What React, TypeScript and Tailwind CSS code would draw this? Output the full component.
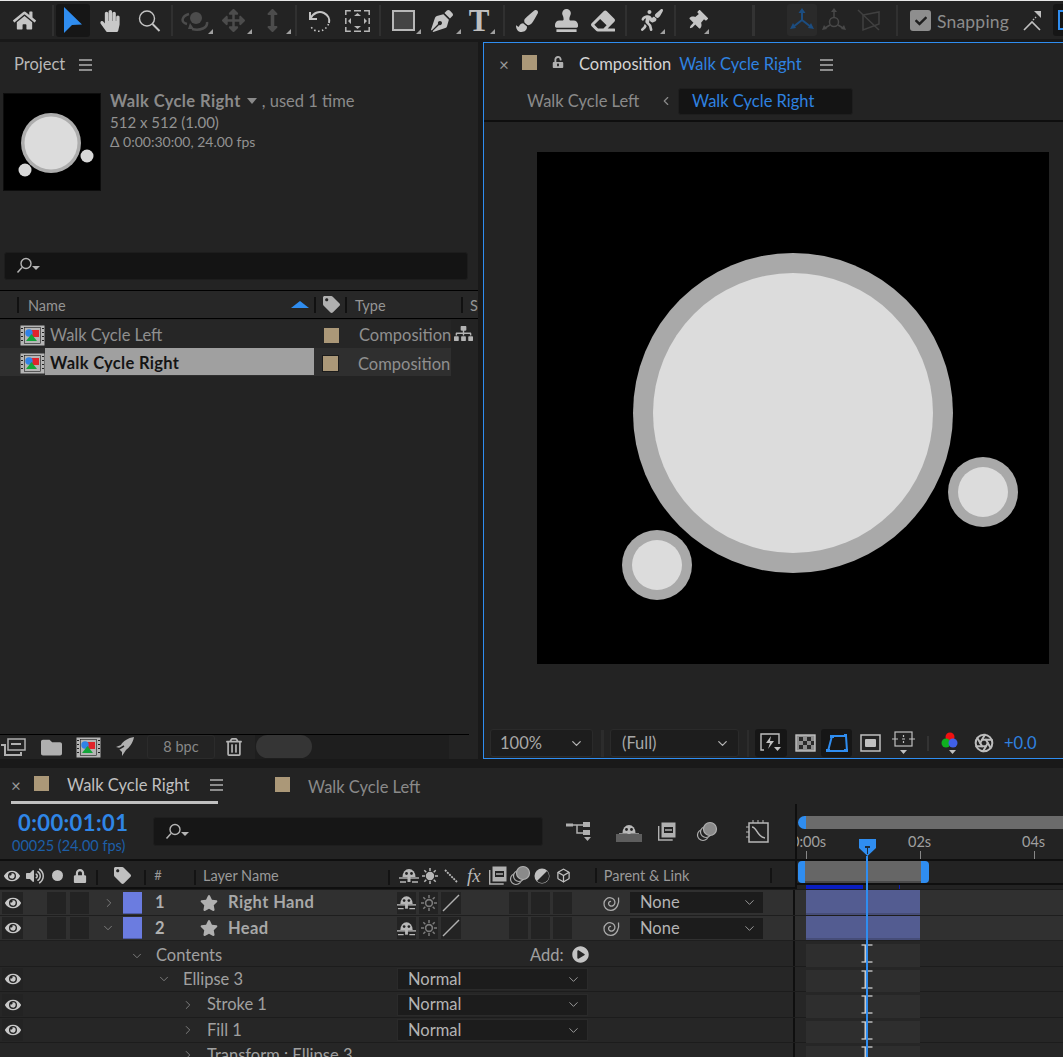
import React from "react";
import { FaHandPaper, FaArrowsAlt, FaArrowsAltV, FaPaintBrush, FaStamp, FaEraser, FaPenNib, FaThumbtack, FaWalking, FaTag, FaEye, FaVolumeUp, FaLock, FaUnlockAlt, FaStar, FaPlayCircle, FaSitemap, FaFolder, FaCheck, FaRegTrashAlt, FaHome } from "react-icons/fa";
import { Aperture, Box, ChevronDown, ChevronRight, ChevronLeft } from "lucide-react";

const font = "font-['Lato','Noto_Sans',sans-serif]";

function Corner() {
  return <span className="absolute right-[1px] bottom-[3px] w-0 h-0 border-l-[5px] border-l-transparent border-b-[5px] border-b-[#a0a0a0]" />;
}

function Slot({ w, children, corner, className = "" }: { w: number; children?: React.ReactNode; corner?: boolean; className?: string }) {
  return (
    <div style={{ width: w }} className={`relative h-[33px] flex items-center justify-center shrink-0 ${className}`}>
      {children}
      {corner && <Corner />}
    </div>
  );
}

function Div({ w, thick }: { w: number; thick?: boolean }) {
  return (
    <div style={{ width: w }} className="h-[33px] flex items-center justify-center shrink-0">
      <div className={`${thick ? "w-[3px] bg-[#333]" : "w-[2px] bg-[#303030]"} h-[31px]`} />
    </div>
  );
}

function Burger({ className = "" }: { className?: string }) {
  return (
    <svg width="13" height="12" viewBox="0 0 13 12" className={`shrink-0 ${className}`}>
      <path d="M0 1h13M0 6h13M0 11h13" stroke="#b0b0b0" strokeWidth="1.5" />
    </svg>
  );
}

function Swatch({ className = "" }: { className?: string }) {
  return <div className={`w-[15px] h-[15px] bg-[#ab9878] shrink-0 ${className}`} />;
}

function Search() {
  return (
    <svg width="26" height="18" viewBox="0 0 26 18">
      <circle cx="10" cy="6.5" r="5" fill="none" stroke="#b4b4b4" strokeWidth="1.4" />
      <path d="M6 10.5 1.5 15.5" stroke="#b4b4b4" strokeWidth="1.5" />
      <path d="M16 9h8l-4 4z" fill="#b4b4b4" />
    </svg>
  );
}

function CompIcon() {
  return (
    <svg width="25" height="21" viewBox="0 0 25 21" className="shrink-0">
      <rect x="0.5" y="0.5" width="24" height="20" fill="#b5b5b5" />
      <path d="M2 3v1M2 7v1M2 11v1M2 15v1M23 3v1M23 7v1M23 11v1M23 15v1" stroke="#222" strokeWidth="2" />
      <rect x="4.5" y="2.5" width="16" height="16" fill="#b5b5b5" stroke="#1b1b1b" strokeWidth="0.6" />
      <rect x="11" y="5" width="8" height="7" fill="#e0242c" />
      <circle cx="9" cy="8" r="3.7" fill="#2f82e8" />
      <path d="M11.5 9 17 16H6z" fill="#13a53a" />
    </svg>
  );
}

function Shy({ w = 20 }: { w?: number }) {
  return (
    <svg width={w} height="17" viewBox="0 0 20 17">
      <path d="M3.500 10a6.500 8 0 0 1 13 0z" fill="#b8b8b8" />
      <circle cx="7.500" cy="6.500" r="1.400" fill="#222" />
      <circle cx="12.500" cy="6.500" r="1.400" fill="#222" />
      <path d="M0 11h20" stroke="#b8b8b8" strokeWidth="1.400" />
      <path d="M8.500 10h3v5h-3z" fill="#b8b8b8" />
      <path d="M1 15h6M13 15h6" stroke="#b8b8b8" strokeWidth="1.400" />
    </svg>
  );
}

function Sun({ dim }: { dim?: boolean }) {
  const c = dim ? "#7c7c7c" : "#b8b8b8";
  return (
    <svg width="16" height="16" viewBox="0 0 16 16">
      <circle cx="8" cy="8" r="3.4" fill={dim ? "none" : c} stroke={c} strokeWidth="1.6" />
      <path d="M8 0v3M8 13v3M0 8h3M13 8h3M2.3 2.3l2 2M11.7 11.7l2 2M2.3 13.7l2-2M11.7 4.3l2-2" stroke={c} strokeWidth="1.5" />
    </svg>
  );
}

function Film() {
  return (
    <svg width="18" height="19" viewBox="0 0 18 19">
      <rect x="3.5" y="0.5" width="14" height="15" fill="#b0b0b0" />
      <path d="M6 5h9v6H6z" fill="#232323" />
      <path d="M7 8h7" stroke="#b0b0b0" strokeWidth="1.5" />
      <path d="M0.7 4v14h14" fill="none" stroke="#b0b0b0" strokeWidth="1.4" />
    </svg>
  );
}

function Blur() {
  return (
    <svg width="22" height="21" viewBox="0 0 22 21">
      <circle cx="7" cy="14" r="5.5" fill="none" stroke="#b0b0b0" strokeWidth="1.2" />
      <circle cx="10" cy="11" r="5.5" fill="#232323" stroke="#b0b0b0" strokeWidth="1.2" />
      <circle cx="14" cy="8" r="6.5" fill="#8a8a8a" stroke="#b0b0b0" strokeWidth="1.2" />
    </svg>
  );
}

function Spiral() {
  return (
    <svg width="18" height="18" viewBox="0 0 18 18">
      <path d="M16.5 3.5C17.5 9 15 16 9 16.3 4.5 16.5 1.7 13 2 9.2 2.3 5.5 5.5 3.3 8.8 3.8c3 .5 4.6 3 4 5.500-.5 2-2.500 3.200-4.300 2.700-1.500-.4-2.200-1.900-1.800-3.200.3-1 1.400-1.600 2.300-1.200" fill="none" stroke="#aaa" strokeWidth="1.3" />
    </svg>
  );
}

function Toolbar() {
  return (
    <div className="h-[39px] shrink-0 bg-[#232323] border-t border-t-[#e8e8e8] flex items-start pt-[3px]">
      <Slot w={49}><FaHome size={23} color="#c4c4c4" /></Slot>
      <Div w={7} />
      <div className="h-[33px] w-[34px] shrink-0 rounded-[3px] bg-[#161616] flex items-center justify-center">
        <svg width="20" height="27" viewBox="0 0 20 27"><path d="M1 0 19 17.500 9 18 1 26z" fill="#2f8df0" /></svg>
      </div>
      <Slot w={40}><FaHandPaper size={22} color="#c8c8c8" /></Slot>
      <Slot w={38}>
        <svg width="24" height="24" viewBox="0 0 24 24"><circle cx="10" cy="9.500" r="7.500" fill="none" stroke="#c4c4c4" strokeWidth="1.4" /><path d="m15.500 15 7 7" stroke="#c4c4c4" strokeWidth="2" /></svg>
      </Slot>
      <Div w={8} />
      <Slot w={38} corner>
        <svg width="28" height="24" viewBox="0 0 28 24"><circle cx="15" cy="9" r="6" fill="#4c4c4c" /><path d="M8 5C1 7-1 13 6 15M11 20c8 2 16-1 15-7" fill="none" stroke="#4c4c4c" strokeWidth="2.500" /><path d="m9 14-2 6 6 0z" fill="#4c4c4c" /></svg>
      </Slot>
      <Slot w={39} corner><FaArrowsAlt size={23} color="#4c4c4c" /></Slot>
      <Slot w={39} corner><FaArrowsAltV size={23} color="#4c4c4c" /></Slot>
      <Div w={7} />
      <Slot w={40}>
        <svg width="26" height="26" viewBox="0 0 26 26"><path d="M4 4v7h7" fill="none" stroke="#c4c4c4" strokeWidth="2" /><path d="M4.500 10.500C7 5 13 2.500 18 5c4 2 6 6 5 10" fill="none" stroke="#c4c4c4" strokeWidth="2" /><path d="M22.500 16c-2 5-7 8-12 7-2-.4-4-2-5.500-4" fill="none" stroke="#c4c4c4" strokeWidth="1.600" strokeDasharray="1.500 2.500" /></svg>
      </Slot>
      <Slot w={36}>
        <svg width="25" height="22" viewBox="0 0 25 22"><path d="M.8 5V.8h5M19 .8h5.200V5M.8 17v4.200h5M19 21.200h5.200V17M9 .8h7M9 21.200h7M.8 8v6M24.200 8v6" fill="none" stroke="#b8b8b8" strokeWidth="1.500" /><path d="M9 6h7l-3.500-3zM9 16h7l-3.500 3zM6 8v6l-3-3zM19 8v6l3-3z" fill="#b8b8b8" /></svg>
      </Slot>
      <Div w={10} />
      <Slot w={37} corner>
        <div className="w-[23px] h-[21px] bg-[#444] border-2 border-[#b8b8b8]" />
      </Slot>
      <Slot w={40} corner><FaPenNib size={22} color="#c4c4c4" /></Slot>
      <Slot w={34} corner>
        <span className="font-['Liberation_Serif',serif] text-[31px] leading-none font-bold text-[#c0c0c0]">T</span>
      </Slot>
      <Div w={16} />
      <Slot w={30}><FaPaintBrush size={22} color="#c4c4c4" /></Slot>
      <Slot w={48}><FaStamp size={23} color="#c4c4c4" /></Slot>
      <Slot w={26}><FaEraser size={24} color="#c4c4c4" /></Slot>
      <Div w={20} />
      <Slot w={30} corner>
        <FaWalking size={21} color="#c4c4c4" className="-ml-[8px]" />
        <FaPaintBrush size={13} color="#c4c4c4" className="absolute right-[3px] top-[5px]" />
      </Slot>
      <Div w={18} />
      <Slot w={26} corner><FaThumbtack size={20} color="#c4c4c4" className="rotate-45" /></Slot>
      <div className="w-[41px] shrink-0" />
      <Div w={5} thick />
      <div className="w-[31px] shrink-0" />
      <div className="h-[32px] w-[30px] shrink-0 rounded-[3px] bg-[#2a2a2a] flex items-center justify-center">
        <svg width="26" height="26" viewBox="0 0 26 26"><path d="M13 13V4M13 13 4 20M13 13l9 7" stroke="#1c4d80" strokeWidth="2" /><path d="m13 1 3.500 5h-7zM1 22l3-6 3 5zM25 22l-3-6-3 5z" fill="#1c4d80" /></svg>
      </div>
      <Slot w={34}>
        <svg width="24" height="26" viewBox="0 0 24 26"><circle cx="12" cy="14" r="4.500" fill="none" stroke="#484848" strokeWidth="1.500" /><path d="M12 9V3M8 17l-5 3M16 17l5 3" stroke="#484848" strokeWidth="1.500" /><path d="m12 0 3 4H9zM0 22l2-5 3 4zM24 22l-2-5-3 4z" fill="#484848" /></svg>
      </Slot>
      <Slot w={36}>
        <svg width="24" height="24" viewBox="0 0 24 24"><path d="M6 6 22 3v12L6 21z" fill="none" stroke="#404040" strokeWidth="1.500" /><path d="m1 1 21 20" stroke="#404040" strokeWidth="1.500" /></svg>
      </Slot>
      <Div w={20} />
      <div className="flex items-center h-[33px] shrink-0">
        <div className="w-[21px] h-[21px] rounded-[3px] bg-[#8e8e8e] flex items-center justify-center ml-[3px]"><FaCheck size={12} color="#1f1f1f" /></div>
        <span className={`${font} ml-[6px] mt-[4px] text-[17.500px] text-[#8c8c8c] tracking-[0.2px]`}>Snapping</span>
      </div>
      <Slot w={40} className="ml-[4px]">
        <svg width="20" height="22" viewBox="0 0 20 22"><path d="m1 20 8-8 8 8" fill="none" stroke="#c0c0c0" strokeWidth="1.600" /><path d="m10 10 3-3" stroke="#c0c0c0" strokeWidth="1.500" strokeDasharray="1.500 1.500" /><path d="M18 1v7l-7-7z" fill="#c0c0c0" /></svg>
      </Slot>
      <div className="h-[32px] flex-1 bg-[#161616] rounded-l-[3px] pl-[5px] flex items-center"><div className="w-[5px] h-[20px] border-l-2 border-y-2 border-[#2f8df0]" /></div>
    </div>
  );
}

function ProjectPanel() {
  return (
    <div className={`w-[478px] shrink-0 bg-[#232323] flex flex-col ${font} overflow-hidden`}>
      <div className="h-[44px] shrink-0 flex items-center pl-[14px] pt-[1px]">
        <span className="text-[16.500px] text-[#b8b8b8]">Project</span>
        <Burger className="ml-[14px]" />
      </div>
      <div className="h-[104px] shrink-0 flex pl-[3px] pt-[7px]">
        <div className="w-[98px] h-[98px] bg-black border border-[#0d0d0d]">
          <svg width="96" height="96" viewBox="0 0 96 96" className="blur-[0.5px]">
            <circle cx="47" cy="49" r="30" fill="#adadad" />
            <circle cx="47" cy="49" r="26.500" fill="#dcdcdc" />
            <circle cx="83" cy="62" r="6.500" fill="#d8d8d8" />
            <circle cx="21" cy="76" r="6.500" fill="#d8d8d8" />
          </svg>
        </div>
        <div className="ml-[9px] flex flex-col text-[14.500px] text-[#8a8a8a] leading-[20.500px] -mt-[2px]">
          <div className="flex items-center text-[16.500px]">
            <span className="font-bold text-[#8a8a8a] tracking-[0.4px]">Walk Cycle Right</span>
            <span className="ml-[6px] w-0 h-0 border-x-[5px] border-x-transparent border-t-[6px] border-t-[#8a8a8a]" />
            <span className="ml-[5px]">, used 1 time</span>
          </div>
          <span className="text-[15px] text-[#929292]">512 x 512 (1.00)</span>
          <span className="text-[14px] text-[#929292]">Δ 0:00:30:00, 24.00 fps</span>
        </div>
      </div>
      <div className="h-[28px] shrink-0 mt-[62px] mx-[4px] w-[464px] bg-[#141414] rounded-[3px] border border-[#1d1d1d] flex items-center pl-[11px]"><Search /></div>
      <div className="h-[29px] shrink-0 mt-[10px] bg-[#272727] border-y border-black flex items-center text-[14.500px] text-[#959595]">
        <div className="w-[19px] h-[16px] border-r-2 border-[#111] shrink-0" />
        <span className="ml-[9px] mt-[2px] w-[263px]">Name</span>
        <span className="w-0 h-0 border-x-[9px] border-x-transparent border-b-[7px] border-b-[#2f8df0] shrink-0" />
        <div className="ml-[5px] h-[16px] w-[2px] bg-[#111] shrink-0" />
        <div className="w-[29px] flex justify-center shrink-0 pl-[2px]"><FaTag size={17} color="#b0b0b0" /></div>
        <div className="h-[16px] w-[2px] bg-[#111] shrink-0" />
        <span className="ml-[8px] mt-[2px] w-[106px] shrink-0">Type</span>
        <div className="h-[16px] w-[2px] bg-[#111] shrink-0" />
        <span className="ml-[7px] mt-[2px]">S</span>
      </div>
      <div className="h-[29px] shrink-0 flex items-center text-[16.500px] text-[#8f8f8f]">
        <div className="w-[451px] h-[28px] bg-[#262626] flex items-center shrink-0 pt-[4px]">
          <div className="ml-[20px]"><CompIcon /></div>
          <span className="ml-[5px] w-[279px] shrink-0">Walk Cycle Left</span>
          <Swatch className="-ml-[5px]" />
          <span className="ml-[20px] whitespace-nowrap">Composition</span>
        </div>
        <div className="ml-[3px]"><FaSitemap size={19} color="#b4b4b4" /></div>
      </div>
      <div className="h-[28px] w-[451px] shrink-0 bg-[#2f2f2f] flex items-center text-[16.500px] text-[#8f8f8f]">
        <div className="ml-[20px] mt-[2px]"><CompIcon /></div>
        <div className="w-[269px] ml-[0px] h-[27px] self-start bg-[#a0a0a0] flex items-center pl-[5px] pt-[3px] font-bold tracking-[0.3px] text-[#141414] shrink-0">Walk Cycle Right</div>
        <div className="ml-[8px] mt-[2px] w-[17px] h-[17px] border border-[#1b1b1b] bg-[#ab9878] shrink-0" />
        <span className="ml-[19px] mt-[4px] whitespace-nowrap">Composition</span>
      </div>
      <div className="flex-1" />
      <div className="h-[25px] shrink-0 w-[469px] border-t border-black flex items-center">
        <div className="w-[26px] flex justify-center shrink-0">
          <svg width="26" height="18" viewBox="0 0 26 18"><rect x="8" y="1" width="17" height="11" fill="none" stroke="#b0b0b0" strokeWidth="1.500" /><path d="M11 6h10" stroke="#b0b0b0" strokeWidth="2" /><path d="M1 7h4v10h16v-3" fill="none" stroke="#b0b0b0" strokeWidth="2" /></svg>
        </div>
        <div className="w-[50px] flex justify-center shrink-0"><FaFolder size={21} color="#b0b0b0" /></div>
        <div className="w-[24px] flex justify-center shrink-0"><CompIcon /></div>
        <div className="w-[50px] flex justify-center shrink-0">
          <svg width="20" height="20" viewBox="0 0 20 20"><path d="M19 0C13 1 8 4 6 8l-5 2 4 1-1 1 3 3 0 4 4-6c3-2 7-7 8-13z" fill="#b0b0b0" /><path d="M4 12 9 9" stroke="#232323" strokeWidth="1.500" /></svg>
        </div>
        <div className="w-[68px] -ml-[3px] h-[24px] rounded-[3px] border border-[#2b2b2b] text-[14.500px] text-[#888] flex items-center justify-center shrink-0">8 bpc</div>
        <div className="w-[38px] flex justify-center shrink-0"><FaRegTrashAlt size={18} color="#b4b4b4" /></div>
        <div className="ml-[2px] w-[194px] h-[24px] bg-[#1e1e1e] pl-[1px] shrink-0"><div className="w-[56px] h-[23px] rounded-full bg-[#353535]" /></div>
      </div>
    </div>
  );
}

function CtrlSelect({ w, label, pl }: { w: number; label: string; pl: number }) {
  return (
    <div style={{ width: w, paddingLeft: pl }} className="h-[28px] shrink-0 rounded-[3px] bg-[#1d1d1d] border border-[#2a2a2a] flex items-center justify-between pr-[8px] text-[16.500px] text-[#a8a8a8]">
      <span>{label}</span>
      <ChevronDown size={15} color="#b4b4b4" />
    </div>
  );
}

function CompPanel() {
  return (
    <div className={`flex-1 ml-[5px] bg-[#232323] border-l border-y border-[#2f8df0] flex flex-col ${font} overflow-hidden`}>
      <div className="h-[43px] shrink-0 flex items-center">
        <span className="ml-[15px] text-[#9a9a9a] w-[10px] text-[17px] leading-none">×</span>
        <Swatch className="ml-[13px] -mt-[5px]" />
        <FaUnlockAlt size={12} color="#b0b0b0" className="ml-[15px] -mt-[6px]" />
        <span className="ml-[15px] text-[16.500px] text-[#d4d4d4]">Composition</span>
        <span className="ml-[8px] text-[16.500px] text-[#2f82e0]">Walk Cycle Right</span>
        <Burger className="ml-[18px]" />
      </div>
      <div className="h-[36px] shrink-0 flex items-start border-b-2 border-b-[#0e0e0e]">
        <span className="ml-[43px] mt-[3px] text-[16.500px] text-[#8a8a8a] w-[133px] shrink-0">Walk Cycle Left</span>
        <ChevronLeft size={14} color="#8a8a8a" className="mt-[8px] -ml-[1px] shrink-0" />
        <div className="ml-[5px] mt-[2px] w-[175px] h-[27px] rounded-[3px] bg-[#141414] border border-[#1e1e1e] pl-[13px] flex items-center text-[16.500px] text-[#2f82e0]">Walk Cycle Right</div>
      </div>
      <div className="flex-1 flex justify-start pl-[53px] pt-[30px]">
        <svg width="512" height="512" viewBox="0 0 512 512" className="bg-black shrink-0 block">
          <circle cx="256" cy="261" r="160" fill="#a9a9a9" />
          <circle cx="256" cy="261" r="140" fill="#dcdcdc" />
          <circle cx="446" cy="340" r="35" fill="#a9a9a9" />
          <circle cx="446" cy="340" r="25" fill="#dcdcdc" />
          <circle cx="120" cy="413" r="35" fill="#a9a9a9" />
          <circle cx="120" cy="413" r="25" fill="#dcdcdc" />
        </svg>
      </div>
      <div className="h-[34px] shrink-0 flex items-center pl-[6px] pt-[4px]">
        <CtrlSelect w={103} label="100%" pl={9} />
        <div className="w-[3px] h-[27px] bg-[#2c2c2c] ml-[8px]" />
        <div className="w-[6px]" />
        <CtrlSelect w={129} label="(Full)" pl={11} />
        <div className="w-[2px] h-[27px] bg-[#2c2c2c] ml-[8px]" />
        <div className="ml-[6px] w-[32px] h-[28px] rounded-[3px] bg-[#161616] flex items-center justify-center">
          <svg width="22" height="20" viewBox="0 0 22 20"><path d="M4 17H1V1h18v10" fill="none" stroke="#c0c0c0" strokeWidth="1.400" /><path d="M11 3 6 10h4l-2 6 6-8h-4z" fill="#c0c0c0" /><path d="M14 14h7l-3.500 4z" fill="#c0c0c0" /></svg>
        </div>
        <div className="ml-[2px] w-[32px] flex justify-center">
          <svg width="21" height="18" viewBox="0 0 21 18"><rect x="1" y="1" width="19" height="16" fill="#8e8e8e" stroke="#c0c0c0" strokeWidth="1.400" /><path d="M4 3h4v4H4zM12 3h4v4h-4zM8 7h4v4H8zM16 7h3v4h-3zM4 11h4v4H4zM12 11h4v4h-4z" fill="#2a2a2a" /></svg>
        </div>
        <div className="w-[31px] h-[28px] rounded-[3px] bg-[#161616] flex items-center justify-center">
          <svg width="22" height="20" viewBox="0 0 22 20"><path d="M2 18 6 3h14l1 15z" fill="none" stroke="#2f8df0" strokeWidth="2" /><path d="M4 2h4v3H4zM18 1h3v3h-3zM0 16h4v3H0zM18 16h4v3h-4z" fill="#2f8df0" /></svg>
        </div>
        <div className="w-[36px] flex justify-center">
          <svg width="21" height="18" viewBox="0 0 21 18"><rect x="1" y="1" width="19" height="16" fill="#232323" stroke="#c0c0c0" strokeWidth="1.500" /><rect x="5" y="5" width="11" height="8" rx="1" fill="#c0c0c0" /></svg>
        </div>
        <div className="w-[30px] flex justify-center relative">
          <svg width="23" height="24" viewBox="0 0 23 24"><rect x="3" y="1" width="17" height="14" fill="none" stroke="#c0c0c0" strokeWidth="1.200" /><path d="M0 8h6M17 8h6M11.500 4v2M11.500 10v2M10 8h3" stroke="#c0c0c0" strokeWidth="1.200" /><path d="M8 19h7l-3.500 4z" fill="#c0c0c0" /></svg>
        </div>
        <div className="ml-[9px] w-[2px] h-[15px] bg-[#333]" />
        <div className="ml-[11px] w-[22px] flex justify-center">
          <svg width="20" height="24" viewBox="0 0 20 24"><circle cx="9" cy="6" r="4.500" fill="#f01010" /><circle cx="5" cy="12" r="4.500" fill="#10b020" /><circle cx="12" cy="12" r="4.500" fill="#4060e8" /><path d="M8 19h7l-3.500 4z" fill="#c0c0c0" /></svg>
        </div>
        <div className="ml-[12px]"><Aperture size={20} color="#bdbdbd" strokeWidth={2.400} /></div>
        <span className="ml-[10px] text-[16.500px] text-[#2f82e0]">+0.0</span>
      </div>
    </div>
  );
}

function HeaderCell({ w, line, children }: { w: number; line?: boolean; children?: React.ReactNode }) {
  return (
    <div style={{ width: w }} className="h-full flex items-center justify-center shrink-0 relative">
      {children}
      {line && <div className="absolute right-0 top-[6px] h-[15px] w-[2px] bg-[#131313]" />}
    </div>
  );
}

function Cell({ w = 19, className = "", children }: { w?: number; className?: string; children?: React.ReactNode }) {
  return <div style={{ width: w }} className={`h-[22px] bg-[#232323] flex items-center justify-center shrink-0 ${className}`}>{children}</div>;
}

function Eye() {
  return <FaEye size={16} color="#c8c8c8" />;
}

function LayerRow({ h, num, name, open }: { h: number; num: string; name: string; open?: boolean }) {
  return (
    <div style={{ height: h }} className="flex shrink-0 border-b border-b-[#1e1e1e]">
      <div className="w-[795px] shrink-0 bg-[#303030] flex items-center border-r-2 border-r-[#0f0f0f]">
        <Cell w={21} className="ml-[2px]"><Eye /></Cell>
        <Cell className="ml-[24px]" />
        <Cell className="ml-[4px]" />
        <div className="w-[34px] flex justify-end shrink-0 pr-[8px]">
          {open ? <ChevronDown size={14} color="#8a8a8a" strokeWidth={1.400} /> : <ChevronRight size={14} color="#8a8a8a" strokeWidth={1.400} className="-mr-[1px]" />}
        </div>
        <div className="w-[19px] h-[22px] bg-[#6b7ce0] border-b border-[#4f5ca8] shrink-0" />
        <span className="ml-[13px] w-[45px] shrink-0 text-[16.500px] font-bold text-[#b0b0b0]">{num}</span>
        <FaStar size={18} color="#b0b0b0" className="shrink-0" />
        <span className="ml-[10px] w-[169px] shrink-0 text-[16.500px] font-bold tracking-[0.4px] text-[#a8a8a8]">{name}</span>
        <Cell><Shy /></Cell>
        <Cell className="ml-[3px]"><Sun dim /></Cell>
        <Cell w={20} className="ml-[3px]">
          <svg width="18" height="18" viewBox="0 0 18 18"><path d="M1 17 17 1" stroke="#b0b0b0" strokeWidth="1.500" /></svg>
        </Cell>
        <Cell className="ml-[48px]" />
        <Cell className="ml-[3px]" />
        <Cell className="ml-[3px]" />
        <div className="w-[58px] flex justify-end pr-[10px] shrink-0"><Spiral /></div>
        <div className="w-[133px] h-[21px] bg-[#1c1c1c] flex items-center justify-between pl-[10px] pr-[6px] text-[16.500px] text-[#b4b4b4] shrink-0">
          <span>None</span>
          <ChevronDown size={15} color="#a8a8a8" strokeWidth={1.400} />
        </div>
      </div>
      <div className="flex-1 bg-[#303030] pl-[11px]">
        <div className="w-[114px] h-full bg-[#535c91] border-b-2 border-b-[#464d78]" />
      </div>
    </div>
  );
}

function PropRow({ h, indent, chev, label, mode, add, lower }: { h: number; indent: number; chev: "d" | "r"; label: string; mode?: boolean; add?: boolean; lower?: boolean }) {
  return (
    <div style={{ height: h }} className="flex shrink-0 border-b border-b-[#1c1c1c]">
      <div className={`w-[795px] shrink-0 bg-[#262626] flex items-center border-r-2 border-r-[#0f0f0f] relative ${lower ? "pt-[4px]" : ""}`}>
        {mode ? <Cell w={21} className="ml-[2px] bg-[#1e1e1e]"><Eye /></Cell> : <div className="w-[23px] shrink-0" />}
        <div style={{ width: indent }} className="shrink-0 flex justify-end pr-[6px]">
          {chev === "d" ? <ChevronDown size={14} color="#8e8e8e" strokeWidth={1.400} /> : <ChevronRight size={14} color="#8e8e8e" strokeWidth={1.400} />}
        </div>
        <span className="ml-[6px] w-0 shrink-0 whitespace-nowrap text-[16.500px] text-[#a0a0a0]">{label}</span>
        {mode && (
          <div style={{ marginLeft: 368 - indent }} className="w-[191px] h-[22px] bg-[#1c1c1c] border border-[#2a2a2a] flex items-center justify-between pl-[10px] pr-[6px] text-[16.500px] text-[#b4b4b4] shrink-0">
            <span>Normal</span>
            <ChevronDown size={15} color="#a8a8a8" strokeWidth={1.400} />
          </div>
        )}
        {add && (
          <div style={{ marginLeft: 501 - indent }} className="flex items-center shrink-0 text-[16.500px] text-[#a0a0a0]">
            <span>Add:</span>
            <FaPlayCircle size={17} color="#c4c4c4" className="ml-[8px] -mt-[3px]" />
          </div>
        )}
      </div>
      <div className="flex-1 bg-[#262626] pl-[11px]">
        <div className="w-[114px] h-full bg-[#2e2e2e] pl-[55px]">
          <svg width="12" height="19" viewBox="0 0 12 19" className="mt-[3px]">
            <path d="M0.500 1h11M0.500 18h11" stroke="#b8b8b8" strokeWidth="1.500" fill="none" />
            <path d="M4.500 1v17" stroke="#c8c8c8" strokeWidth="2" />
          </svg>
        </div>
      </div>
    </div>
  );
}

function Timeline() {
  return (
    <div className={`flex-1 bg-[#232323] flex flex-col overflow-hidden relative ${font}`}>
      {/* tabs */}
      <div className="h-[36px] shrink-0 flex items-start">
        <div className="ml-[11px] w-[207px] h-[36px] border-b-[3px] border-b-[#c0c0c0] flex items-center shrink-0 pt-[1px]">
          <span className="text-[#9a9a9a] text-[17px] leading-none w-[23px] shrink-0">×</span>
          <Swatch className="-mt-[4px]" />
          <span className="ml-[18px] mt-[1px] text-[16.500px] text-[#c0c0c0] w-[143px] shrink-0">Walk Cycle Right</span>
          <Burger />
        </div>
        <Swatch className="ml-[57px] mt-[9px]" />
        <span className="ml-[18px] mt-[7px] text-[16.500px] text-[#8a8a8a]">Walk Cycle Left</span>
      </div>
      {/* controls + ruler */}
      <div className="h-[57px] shrink-0 flex border-b-2 border-b-[#0f0f0f]">
        <div className="w-[795px] shrink-0 flex items-center relative">
          <div className="w-[153px] shrink-0 flex flex-col pl-[12px] mt-[5px]">
            <span className="ml-[6px] text-[22px] leading-[24px] font-bold text-[#2f86e6] tracking-[0.4px]">0:00:01:01</span>
            <span className="text-[14.500px] leading-[22px] text-[#1d5fa8]">00025 (24.00 fps)</span>
          </div>
          <div className="w-[390px] h-[29px] bg-[#161616] rounded-[3px] border border-[#1e1e1e] flex items-center pl-[11px] shrink-0"><Search /></div>
          <div className="ml-[23px] w-[26px] flex justify-center">
            <svg width="26" height="20" viewBox="0 0 26 20"><path d="M4 3h14M11 3v8h7" stroke="#b0b0b0" strokeWidth="1.500" fill="none" /><rect x="0" y="1.500" width="7" height="3" fill="#b0b0b0" /><rect x="17" y="0" width="7" height="5" fill="#b0b0b0" /><rect x="17" y="8" width="7" height="5" fill="#b0b0b0" /><path d="M18 15h7l-3.500 4z" fill="#b0b0b0" /></svg>
          </div>
          <div className="ml-[24px] relative"><Shy w={26} /><div className="absolute left-0 bottom-[-2px] w-[26px] h-[8px] bg-[#5e5e5e]" /></div>
          <div className="ml-[16px]"><Film /></div>
          <div className="ml-[20px]"><Blur /></div>
          <div className="ml-[28px]">
            <svg width="24" height="24" viewBox="0 0 24 24"><path d="M3 3h19v19H3z" fill="none" stroke="#b8b8b8" strokeWidth="1.500" /><path d="M6 7c5 0 5 10 13 11" fill="none" stroke="#b8b8b8" strokeWidth="1.500" /><path d="M0 7h3M0 12h3M0 17h3M7 0v3M12 0v3M17 0v3" stroke="#b8b8b8" strokeWidth="1" /></svg>
          </div>
        </div>
        <div className="flex-1 border-l-2 border-l-[#0f0f0f] flex flex-col pt-[12px] relative overflow-hidden">
          <div className="h-[13px] shrink-0 flex items-center">
            <div className="w-[8px] h-[13px] bg-[#2f8df0] rounded-l-full ml-[1px] shrink-0" />
            <div className="flex-1 h-[13px] bg-[#6b6b6b]" />
          </div>
          <div className="flex mt-[5px] text-[14.500px] text-[#a0a0a0] leading-[16px]">
            <span className="-ml-[6px] w-[117px] shrink-0">0:00s</span>
            <span className="w-[114px] shrink-0">02s</span>
            <span>04s</span>
          </div>
          <div className="flex mt-[1px]">
            <div className="ml-[9px] w-px h-[8px] bg-[#888]" />
            <div className="ml-[113px] w-px h-[8px] bg-[#888]" />
            <div className="ml-[113px] w-px h-[14px] bg-[#888]" />
          </div>
        </div>
      </div>
      {/* column header */}
      <div className="h-[28px] shrink-0 flex">
        <div className="w-[795px] shrink-0 flex items-center border-b-2 border-b-[#0f0f0f] text-[14.500px] text-[#9a9a9a] pt-[3px]">
          <HeaderCell w={24}><Eye /></HeaderCell>
          <HeaderCell w={22}><FaVolumeUp size={18} color="#c0c0c0" /></HeaderCell>
          <HeaderCell w={22}><div className="w-[11px] h-[11px] rounded-full bg-[#c0c0c0]" /></HeaderCell>
          <HeaderCell w={30} line><FaLock size={14} color="#c0c0c0" className="-ml-[6px]" /></HeaderCell>
          <HeaderCell w={48} line><FaTag size={17} color="#c0c0c0" /></HeaderCell>
          <HeaderCell w={50} line><span className="-ml-[26px] text-[13px]">#</span></HeaderCell>
          <div className="w-[194px] shrink-0 h-full relative flex items-center pl-[7px]">
            Layer Name
            <div className="absolute right-0 top-[6px] h-[15px] w-[2px] bg-[#131313]" />
          </div>
          <HeaderCell w={38}><Shy w={22} /></HeaderCell>
          <div className="-ml-[6px]"><Sun /></div>
          <div className="ml-[6px]">
            <svg width="14" height="14" viewBox="0 0 14 14"><path d="M1 1 13 13" stroke="#b8b8b8" strokeWidth="1.800" strokeDasharray="2 1" /></svg>
          </div>
          <span className="ml-[9px] font-['Liberation_Serif',serif] italic text-[19px] text-[#b8b8b8] leading-none">fx</span>
          <div className="ml-[8px]"><Film /></div>
          <div className="ml-[2px]"><Blur /></div>
          <div className="ml-[3px]">
            <svg width="16" height="16" viewBox="0 0 16 16"><circle cx="8" cy="8" r="7.500" fill="#c0c0c0" /><path d="M13 3 3 13a7 7 0 0 0 10-10z" fill="#232323" /></svg>
          </div>
          <Box size={15} color="#c0c0c0" className="ml-[6px]" />
          <div className="ml-[24px] h-[15px] w-[2px] bg-[#131313]" />
          <span className="ml-[7px] w-[166px] shrink-0">Parent &amp; Link</span>
          <div className="h-[15px] w-[2px] bg-[#131313]" />
        </div>
        <div className="flex-1 border-l-2 border-l-[#0f0f0f] flex flex-col">
          <div className="h-[22px] flex shrink-0">
            <div className="ml-[1px] w-[7px] h-[22px] bg-[#2f8df0] rounded-l-[4px]" />
            <div className="w-[116px] h-[22px] bg-[#666] border-b-2 border-b-[#4a4a4a]" />
            <div className="w-[8px] h-[22px] bg-[#2f8df0] rounded-r-[4px]" />
          </div>
          <div className="h-[2px] bg-[#0f0f0f] shrink-0" />
          <div className="h-[4px] shrink-0 flex pl-[9px]">
            <div className="w-[57px] bg-[#0a1ec0]" />
            <div className="ml-[36px] w-px bg-[#0a1ec0]" />
          </div>
        </div>
      </div>
      <div className="h-[1px] shrink-0 bg-[#1a1a1a]" />
      <LayerRow h={26} num="1" name="Right Hand" />
      <LayerRow h={25} num="2" name="Head" open />
      <PropRow h={26} indent={127} chev="d" label="Contents" add lower />
      <PropRow h={25} indent={154} chev="d" label="Ellipse 3" mode />
      <PropRow h={26} indent={178} chev="r" label="Stroke 1" mode />
      <PropRow h={25} indent={178} chev="r" label="Fill 1" mode />
      <PropRow h={25} indent={178} chev="r" label="Transform : Ellipse 3" />
      {/* playhead overlay */}
      <div className="absolute left-[866px] top-[88px] bottom-0 w-[2px] bg-[#2f8df0]" />
      <svg width="17" height="17" viewBox="0 0 17 17" className="absolute left-[859px] top-[71px]"><path d="M0 0h17v9l-8.500 8L0 9z" fill="#2f8df0" /><path d="M6 7h5v2H9v6H8V9H6z" fill="#1c2c3c" /></svg>
    </div>
  );
}

export default function App() {
  return (
    <div className="w-[1063px] h-[1057px] overflow-hidden bg-[#191919] flex flex-col">
      <Toolbar />
      <div className="h-[3px] shrink-0" />
      <div className="h-[717px] shrink-0 flex mb-[9px]">
        <ProjectPanel />
        <CompPanel />
      </div>
      <Timeline />
    </div>
  );
}
